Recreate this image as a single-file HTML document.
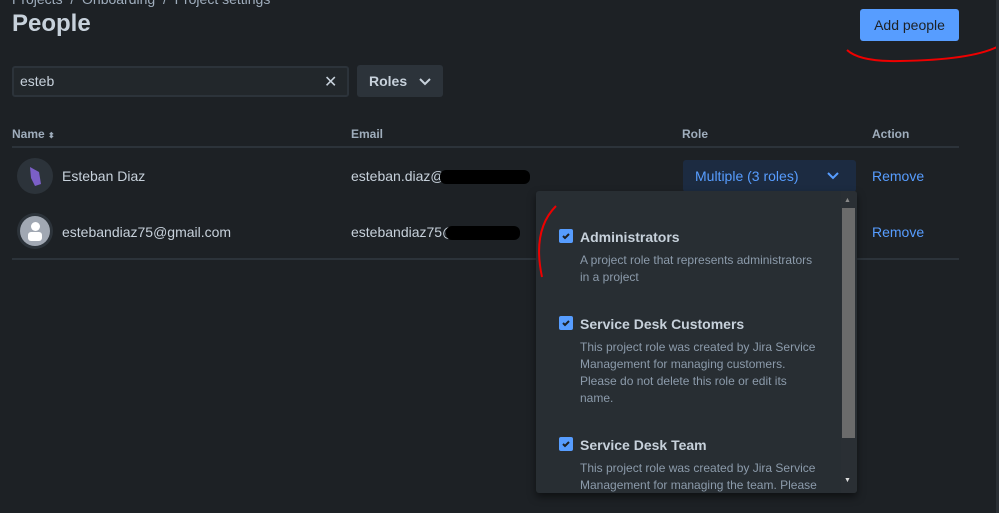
<!DOCTYPE html>
<html><head><style>
*{box-sizing:border-box;margin:0;padding:0}
body{width:999px;height:513px;background:#1d2125;font-family:"Liberation Sans",sans-serif;color:#c7d1db;position:relative;overflow:hidden}
.a{position:absolute;white-space:nowrap}
.bc{left:12px;top:-9px;font-size:14px;color:#9fadbc}
h1{position:absolute;left:12px;top:10px;font-size:24px;font-weight:bold;color:#c7d1db}
.btn{left:860px;top:9px;width:99px;height:32px;background:#579dff;border-radius:3px;color:#1d2125;font-size:14px;line-height:32px;text-align:center}
.inp{left:12px;top:66px;width:337px;height:31px;border:2px solid #2c333a;border-radius:3px;background:#22272b;font-size:14px;line-height:27px;padding-left:6px}
.roles{left:357px;top:65px;width:86px;height:32px;background:#2c333a;border-radius:3px;font-size:14px;font-weight:bold;line-height:32px;padding-left:12px}
.th{top:127px;font-size:12px;font-weight:bold;color:#9fadbc}
.line{left:12px;width:947px;height:2px;background:#2c333a}
.td{font-size:14px;color:#c7d1db}
.blue{color:#579dff}
.dd{left:536px;top:191px;width:321px;height:302px;background:#282e33;border-radius:3px;box-shadow:0 4px 8px rgba(0,0,0,.5);overflow:hidden}
.cb{position:absolute;left:23px;width:14px;height:14px;background:#579dff;border-radius:2px}
.ti{position:absolute;left:44px;font-size:14px;font-weight:bold;color:#c7d1db}
.de{position:absolute;left:44px;font-size:12px;line-height:17px;color:#8c9bab;white-space:normal;width:240px}
</style></head><body>
<div class="a bc">Projects &nbsp;/&nbsp; Onboarding &nbsp;/&nbsp; Project settings</div>
<h1>People</h1>
<div class="a btn">Add people</div>
<svg class="a" style="left:840px;top:40px" width="159" height="30"><path d="M7 10 Q20 22 60 21 Q130 20 157 7" stroke="#e00" stroke-width="2" fill="none"/></svg>
<div class="a" style="left:996px;top:0;width:3px;height:513px;background:#2a2f34"></div>
<div class="a inp">esteb</div>
<div class="a" style="left:324px;top:72px;font-size:16px">✕</div>
<div class="a roles">Roles <svg width="12" height="8" style="margin-left:8px"><path d="M1 1l5 5 5-5" stroke="#c7d1db" stroke-width="2" fill="none"/></svg></div>
<div class="a th" style="left:12px">Name <span style="font-size:8px">⬍</span></div>
<div class="a th" style="left:351px">Email</div>
<div class="a th" style="left:682px">Role</div>
<div class="a th" style="left:872px">Action</div>
<div class="a line" style="top:146px"></div>
<div class="a" style="left:17px;top:158px;width:36px;height:36px;border-radius:50%;background:#2c333a"><svg width="36" height="36"><path d="M13 9 L22 14 L24 26 L18 28 L14 20 Z" fill="#7b5fc7"/></svg></div>
<div class="a td" style="left:62px;top:168px">Esteban Diaz</div>
<div class="a td" style="left:351px;top:168px">esteban.diaz@</div>
<div class="a" style="left:440px;top:170px;width:90px;height:14px;background:#000;border-radius:6px"></div>
<div class="a" style="left:683px;top:160px;width:173px;height:32px;background:#1c2b41;border-radius:3px;color:#579dff;font-size:14px;line-height:32px;padding-left:12px">Multiple (3 roles)<svg width="12" height="8" style="position:absolute;left:144px;top:12px"><path d="M1 1l5 5 5-5" stroke="#579dff" stroke-width="2" fill="none"/></svg></div>
<div class="a td blue" style="left:872px;top:168px">Remove</div>
<div class="a" style="left:17px;top:213px;width:36px;height:36px;border-radius:50%;background:#2c333a"><div style="position:absolute;left:3px;top:3px;width:30px;height:30px;border-radius:50%;background:#a1a8b3"></div><div style="position:absolute;left:14px;top:9px;width:9px;height:9px;border-radius:50%;background:#fff"></div><div style="position:absolute;left:11px;top:19px;width:14px;height:9px;border-radius:3px;background:#fff"></div></div>
<div class="a td" style="left:62px;top:224px">estebandiaz75@gmail.com</div>
<div class="a td" style="left:351px;top:224px">estebandiaz75@</div>
<div class="a" style="left:446px;top:226px;width:74px;height:14px;background:#000;border-radius:6px"></div>
<div class="a td blue" style="left:872px;top:224px">Remove</div>
<div class="a line" style="top:258px"></div>
<div class="a dd">
<div class="cb" style="top:38px"><svg width="14" height="14"><path d="M4 7l2 2 4-4" stroke="#1d2125" stroke-width="2" fill="none"/></svg></div><div class="ti" style="top:38px">Administrators</div>
<div class="de" style="top:61px">A project role that represents administrators in a project</div>
<div class="cb" style="top:125px"><svg width="14" height="14"><path d="M4 7l2 2 4-4" stroke="#1d2125" stroke-width="2" fill="none"/></svg></div><div class="ti" style="top:125px">Service Desk Customers</div>
<div class="de" style="top:148px">This project role was created by Jira Service Management for managing customers. Please do not delete this role or edit its name.</div>
<div class="cb" style="top:246px"><svg width="14" height="14"><path d="M4 7l2 2 4-4" stroke="#1d2125" stroke-width="2" fill="none"/></svg></div><div class="ti" style="top:246px">Service Desk Team</div>
<div class="de" style="top:269px">This project role was created by Jira Service Management for managing the team. Please</div>
<div style="position:absolute;left:305px;top:0;width:16px;height:302px;background:#2a2f34"></div>
<div style="position:absolute;left:306px;top:17px;width:13px;height:230px;background:#6b6b6b"></div>
<div style="position:absolute;left:308px;top:6px;font-size:7px;color:#888">▲</div>
<div style="position:absolute;left:308px;top:286px;font-size:7px;color:#ddd">▼</div>
</div>
<svg class="a" style="left:530px;top:200px" width="30" height="80"><path d="M26 6 Q2 30 12 77" stroke="#e00" stroke-width="2" fill="none"/></svg>
</body></html>
